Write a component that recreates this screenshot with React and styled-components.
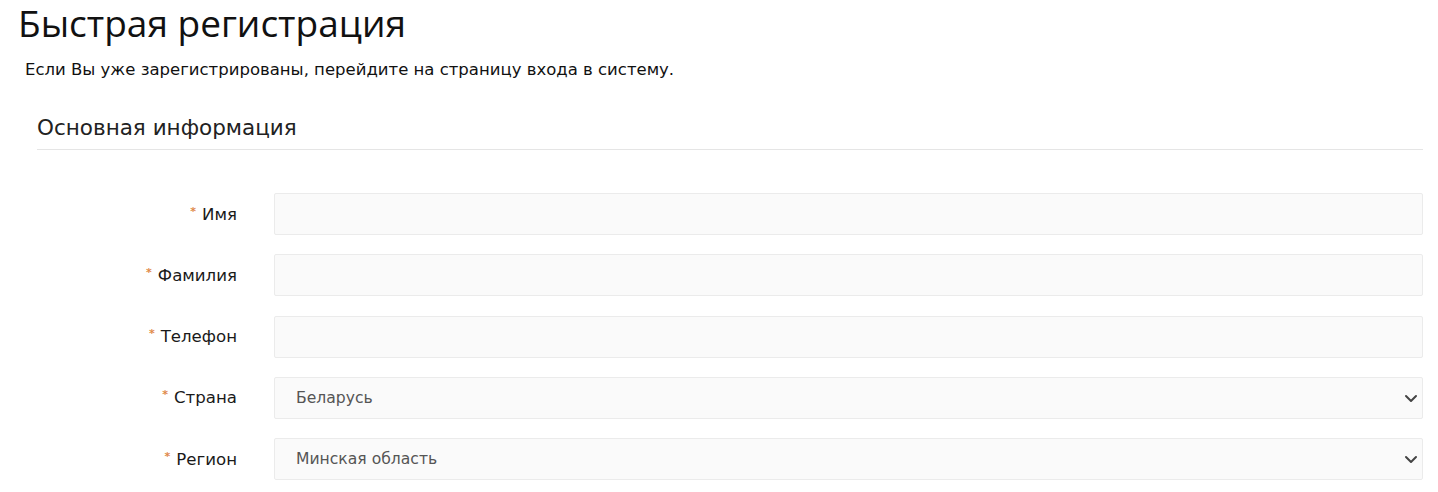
import React from "react";
import styled, { createGlobalStyle } from "styled-components";

const Global = createGlobalStyle`
  html, body { margin: 0; padding: 0; background: #fff; }
  body { font-family: "DejaVu Sans", "Open Sans", sans-serif; color: #1a1a1a; }
`;

const Page = styled.div`
  padding: 0 15px 0 18px;
`;

const Title = styled.h1`
  margin: 0;
  font-family: "Open Sans", sans-serif;
  font-size: 37px;
  font-weight: 400;
  line-height: 46px;
  color: #111;
`;

const Lead = styled.p`
  margin: 13px 0 0 7px;
  font-size: 16.5px;
  line-height: 22px;
  color: #111;
`;

const Section = styled.section`
  margin: 32px 0 0 19px;
`;

const SectionTitle = styled.h2`
  margin: 0;
  font-size: 21.5px;
  font-weight: 400;
  line-height: 30px;
  padding-bottom: 6px;
  border-bottom: 1px solid #e5e5e5;
  color: #222;
`;

const Form = styled.div`
  display: grid;
  grid-template-columns: 200px 1fr;
  column-gap: 37px;
  row-gap: 19.25px;
  margin-top: 43px;
`;

const Label = styled.label`
  display: flex;
  align-items: center;
  justify-content: flex-end;
  gap: 6px;
  font-size: 16.6px;
  color: #1a1a1a;
`;

const Star = styled.span`
  color: #e0894a;
  font-size: 11px;
  font-weight: 700;
  line-height: 1;
  position: relative;
  top: -3px;
`;

const Field = styled.div`
  position: relative;
  height: 42px;
  box-sizing: border-box;
  background: #fafafa;
  border: 1px solid #ebebeb;
  border-radius: 2px;
  display: flex;
  align-items: center;
  padding-left: 21px;
  font-size: 15.6px;
  color: #555;
`;

const Chevron = styled.svg`
  position: absolute;
  right: 4px;
  top: 50%;
  transform: translateY(-50%);
`;

const rows = [
  { label: "Имя" },
  { label: "Фамилия" },
  { label: "Телефон" },
  { label: "Страна", value: "Беларусь", select: true },
  { label: "Регион", value: "Минская область", select: true },
];

export default function App() {
  return (
    <>
      <Global />
      <Page>
        <Title>Быстрая регистрация</Title>
        <Lead>Если Вы уже зарегистрированы, перейдите на страницу входа в систему.</Lead>
        <Section>
          <SectionTitle>Основная информация</SectionTitle>
          <Form>
            {rows.map((r) => (
              <React.Fragment key={r.label}>
                <Label>
                  <Star>*</Star>
                  {r.label}
                </Label>
                <Field>
                  {r.value}
                  {r.select && (
                    <Chevron width="14" height="14" viewBox="0 0 14 14">
                      <path d="M2 5 L7 10 L12 5" fill="none" stroke="#444" strokeWidth="2" strokeLinecap="round" strokeLinejoin="round" />
                    </Chevron>
                  )}
                </Field>
              </React.Fragment>
            ))}
          </Form>
        </Section>
      </Page>
    </>
  );
}
